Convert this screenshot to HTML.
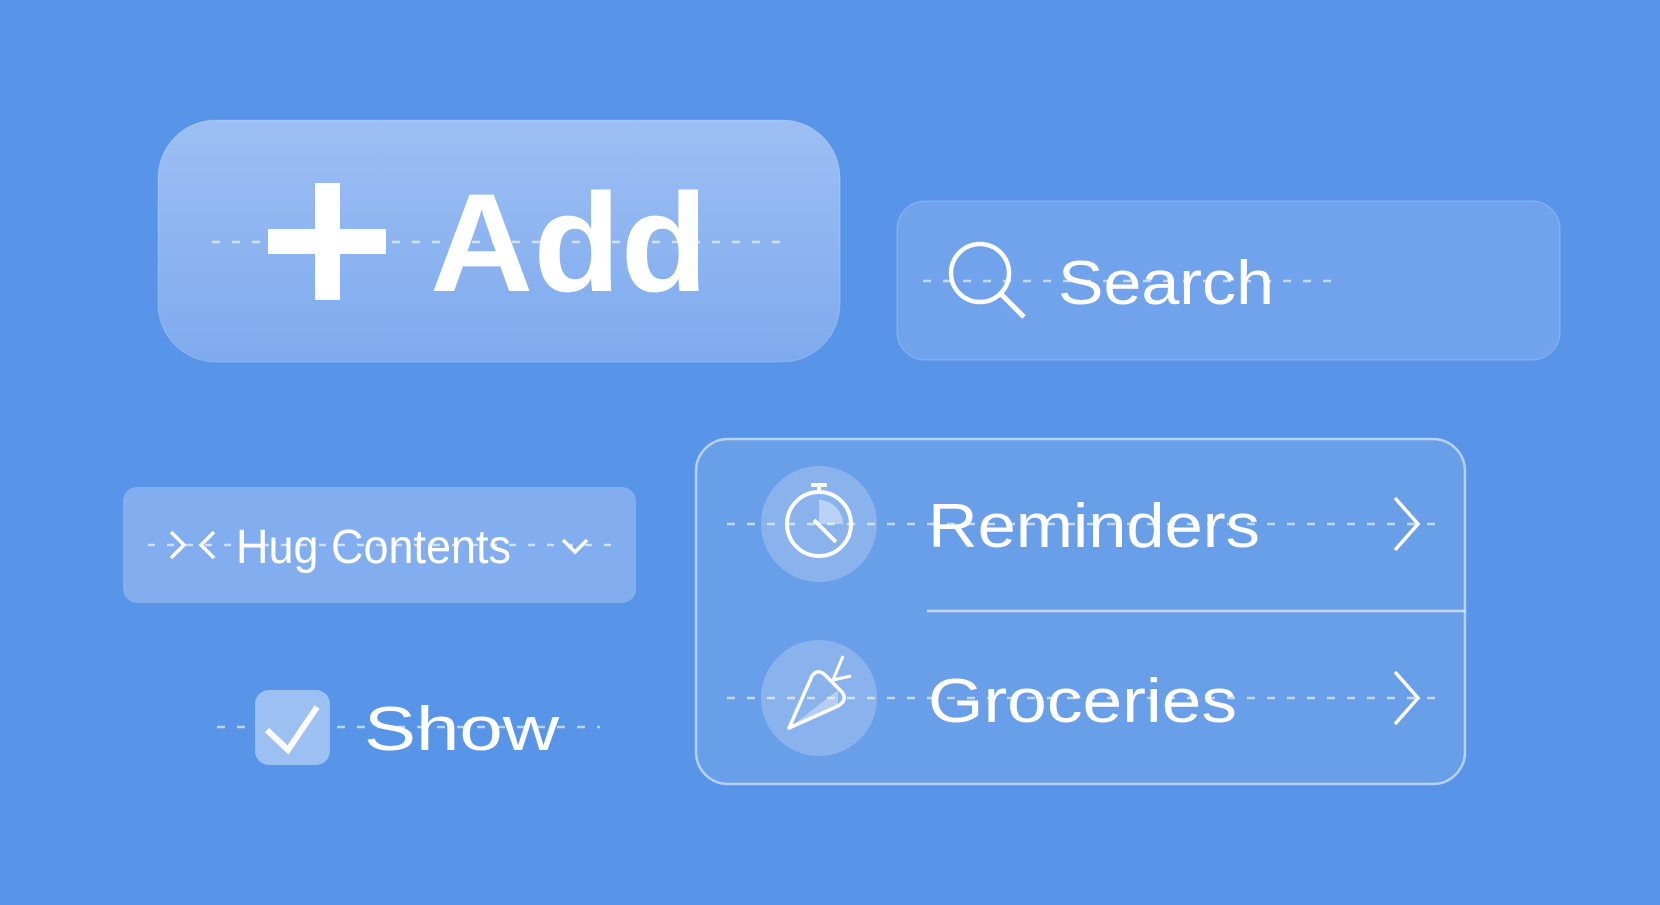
<!DOCTYPE html>
<html><head><meta charset="utf-8"><style>
html,body{margin:0;padding:0;background:#5894E8;}
svg{display:block}
text{font-family:"Liberation Sans",sans-serif;fill:#fff}
</style></head><body>
<svg width="1660" height="905" viewBox="0 0 1660 905" xmlns="http://www.w3.org/2000/svg">
<defs>
<linearGradient id="ga" x1="0" y1="0" x2="0" y2="1">
<stop offset="0" stop-color="#9dbff3"/><stop offset="1" stop-color="#7eaaee"/></linearGradient>
</defs>
<rect width="1660" height="905" fill="#5894E8"/>
<!-- Add -->
<rect x="158" y="120" width="682" height="242" rx="58" fill="url(#ga)" stroke="rgba(255,255,255,0.2)"/>
<line x1="212" y1="242" x2="790" y2="242" stroke="rgba(255,255,255,0.6)" stroke-width="2.5" stroke-dasharray="8 12"/>
<rect x="315" y="183" width="25" height="117" fill="#fff"/>
<rect x="268" y="229" width="118" height="25" fill="#fff"/>
<text x="430" y="291" font-size="140" font-weight="bold" textLength="278" lengthAdjust="spacingAndGlyphs">Add</text>
<!-- Search -->
<rect x="897" y="201" width="663" height="159" rx="28" fill="#70a3ec" stroke="rgba(255,255,255,0.25)"/>
<line x1="923" y1="281" x2="1335" y2="281" stroke="rgba(255,255,255,0.6)" stroke-width="2.5" stroke-dasharray="8 12"/>
<circle cx="980" cy="273" r="29" fill="none" stroke="#fff" stroke-width="4.5"/>
<line x1="1001" y1="294" x2="1024" y2="317" stroke="#fff" stroke-width="5"/>
<text x="1058" y="304" font-size="62" textLength="216" lengthAdjust="spacingAndGlyphs">Search</text>
<!-- Hug -->
<rect x="123" y="487" width="513" height="116" rx="14" fill="#82aef0"/>
<line x1="148" y1="545" x2="612" y2="545" stroke="rgba(255,255,255,0.6)" stroke-width="2.5" stroke-dasharray="7 12"/>
<polyline points="171,532 184,545 171,558" fill="none" stroke="#fff" stroke-width="3.5"/>
<polyline points="214,532 201,545 214,558" fill="none" stroke="#fff" stroke-width="3.5"/>
<polyline points="563,540 575,552 587,540" fill="none" stroke="#fff" stroke-width="3.5"/>
<text x="236" y="563" font-size="48" textLength="275" lengthAdjust="spacingAndGlyphs">Hug Contents</text>
<!-- Show -->
<line x1="217" y1="727" x2="600" y2="727" stroke="rgba(255,255,255,0.6)" stroke-width="2.5" stroke-dasharray="8 12"/>
<rect x="255" y="690" width="75" height="75" rx="14" fill="#9dc0f3"/>
<polyline points="267,730 288,750 317,707" fill="none" stroke="#fff" stroke-width="6"/>
<text x="364" y="750" font-size="62" textLength="195" lengthAdjust="spacingAndGlyphs">Show</text>
<!-- List -->
<rect x="696" y="439" width="769" height="345" rx="32" fill="#699ee9" stroke="rgba(255,255,255,0.55)" stroke-width="2.5"/>
<line x1="927" y1="611" x2="1465" y2="611" stroke="rgba(255,255,255,0.6)" stroke-width="2.5"/>
<circle cx="819" cy="524" r="58" fill="rgba(255,255,255,0.22)"/>
<circle cx="819" cy="698" r="58" fill="rgba(255,255,255,0.22)"/>
<line x1="727" y1="524" x2="1440" y2="524" stroke="rgba(255,255,255,0.6)" stroke-width="2.5" stroke-dasharray="8 12"/>
<line x1="727" y1="698" x2="1440" y2="698" stroke="rgba(255,255,255,0.6)" stroke-width="2.5" stroke-dasharray="8 12"/>
<!-- stopwatch -->
<path d="M819,500 A24,24 0 0 1 843,524 L819,524 Z" fill="rgba(255,255,255,0.4)"/>
<circle cx="819" cy="524" r="32" fill="none" stroke="#fff" stroke-width="4"/>
<line x1="819" y1="490" x2="819" y2="484" stroke="#fff" stroke-width="4"/>
<line x1="811" y1="485" x2="827" y2="485" stroke="#fff" stroke-width="4"/>
<line x1="814" y1="520" x2="836" y2="542" stroke="#fff" stroke-width="4"/>
<!-- carrot -->
<path d="M789,728 L812,676 Q818,668 825,675 L842,692 Q848,700 838,706 Z" fill="none" stroke="#fff" stroke-width="3.5" stroke-linejoin="round"/>
<path d="M789,728 L838,690 L838,706 Z" fill="rgba(255,255,255,0.35)"/>
<line x1="833" y1="680" x2="843" y2="656" stroke="#fff" stroke-width="3"/>
<line x1="833" y1="680" x2="851" y2="676" stroke="#fff" stroke-width="3"/>
<text x="928" y="547" font-size="62" textLength="332" lengthAdjust="spacingAndGlyphs">Reminders</text>
<text x="928" y="722" font-size="62" textLength="309" lengthAdjust="spacingAndGlyphs">Groceries</text>
<polyline points="1395,498 1418,524 1395,550" fill="none" stroke="#fff" stroke-width="3.5"/>
<polyline points="1395,672 1418,698 1395,724" fill="none" stroke="#fff" stroke-width="3.5"/>
</svg>
</body></html>
